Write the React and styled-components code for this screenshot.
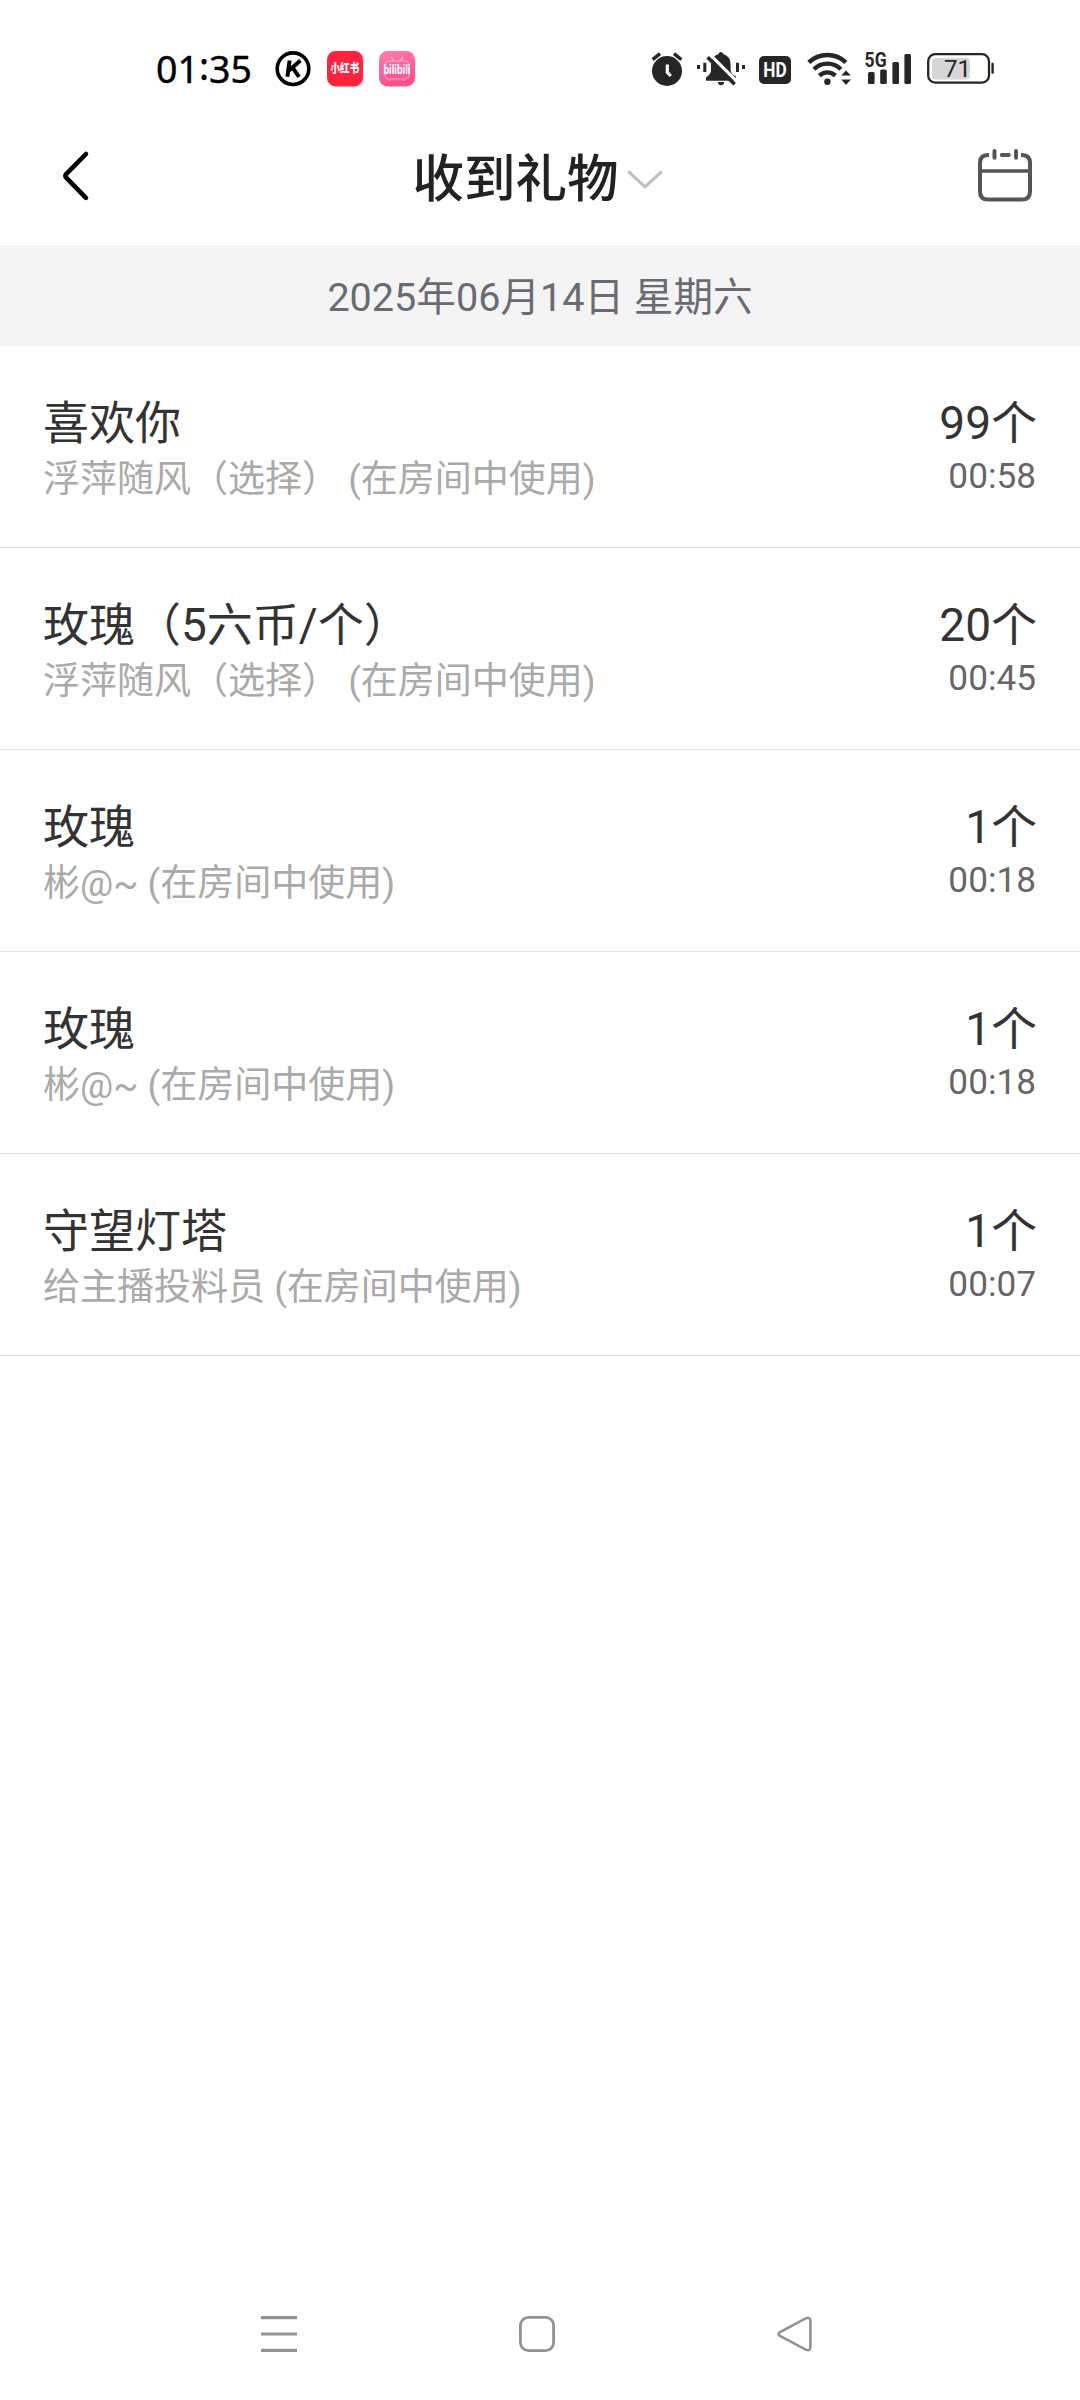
import React from "react";
import styled, { createGlobalStyle } from "styled-components";

const gifts = [
  { name: "喜欢你", from: "浮萍随风（选择） (在房间中使用)", count: "99个", time: "00:58" },
  { name: "玫瑰（5六币/个）", from: "浮萍随风（选择） (在房间中使用)", count: "20个", time: "00:45" },
  { name: "玫瑰", from: "彬@~ (在房间中使用)", count: "1个", time: "00:18" },
  { name: "玫瑰", from: "彬@~ (在房间中使用)", count: "1个", time: "00:18" },
  { name: "守望灯塔", from: "给主播投料员 (在房间中使用)", count: "1个", time: "00:07" },
];

const StatusLeft = () => {
  return (
    <StatusGroup $gap={16}>
      <Clock>01<Colon>:</Colon>35</Clock>
      <svg width="36" height="38" viewBox="0 0 36 38">
        <circle cx="18" cy="18.7" r="15.8" fill="none" stroke="#000" strokeWidth="3.6" />
        <path d="M14.6 10.4L12.4 26.8M25.4 10.4L14 20.4M17.6 17.6L24 26.8" fill="none" stroke="#000" strokeWidth="4" />
      </svg>
      <svg width="36" height="38" viewBox="0 0 36 38">
        <rect x="0" y="1" width="36" height="35.5" rx="8.5" fill="#ff2340" />
        <BadgeText x="3.6" y="23.2" fontSize="12" textLength="28.6" lengthAdjust="spacingAndGlyphs">小红书</BadgeText>
      </svg>
      <svg width="36" height="38" viewBox="0 0 36 38">
        <defs>
          <linearGradient id="pink" x1="0" y1="0" x2="0.3" y2="1">
            <stop offset="0" stopColor="#fd7fb2" />
            <stop offset="1" stopColor="#fb4f8c" />
          </linearGradient>
        </defs>
        <rect x="0" y="1" width="36" height="35.5" rx="8.5" fill="url(#pink)" />
        <rect x="6" y="11" width="24" height="18" rx="4" fill="none" stroke="#fda5c8" strokeWidth="1.2" />
        <path d="M12 7l3 4M24 7l-3 4M11 29v2M25 29v2" stroke="#fda5c8" strokeWidth="1.6" />
        <BadgeText x="4.5" y="24" fontSize="13" $weight={700} textLength="27" lengthAdjust="spacingAndGlyphs">bilibili</BadgeText>
      </svg>
    </StatusGroup>
  );
};

const StatusRight = () => {
  return (
    <StatusGroup $gap={14}>
      <svg width="32" height="38" viewBox="0 0 32 38">
        <circle cx="16" cy="21" r="15" fill="#262626" />
        <path d="M1.6 9.6L9 3.7M23 3.7L30.4 9.6" stroke="#262626" strokeWidth="3.4" />
        <path d="M16.3 14.5V22.4L19.8 26" fill="none" stroke="#fff" strokeWidth="3.2" />
      </svg>
      <svg width="48" height="38" viewBox="0 0 48 38">
        <path d="M0 15h3v4H0zM6.3 12.7h3V22h-3zM39 12.7h3V22h-3zM45 15h3v4h-3z" fill="#262626" />
        <path d="M9 30.7V27.5Q14 24 14 20V14Q14.5 6 21.5 4Q22 2 23.8 2T26.2 4Q33.2 6 33.6 14V20Q33.8 24.5 38.8 26.2V30.7Z" fill="#262626" />
        <path d="M20.8 32H27.2Q26.6 35.2 24 35.2T20.8 32Z" fill="#262626" />
        <path d="M13 4.6L41.5 33.1" stroke="#fff" strokeWidth="3.4" />
        <path d="M10.6 7.2L37.6 34.2" stroke="#262626" strokeWidth="3.6" />
      </svg>
      <svg width="32" height="38" viewBox="0 0 32 38">
        <rect x="0" y="6" width="32" height="28" rx="5" fill="#262626" />
        <BadgeText x="4.3" y="27.4" fontSize="20.5" $weight={700} textLength="23.4" lengthAdjust="spacingAndGlyphs">HD</BadgeText>
      </svg>
      <WifiIcon width="44" height="38" viewBox="0 0 44 38">
        <g fill="none" stroke="#262626" strokeWidth="4.4">
          <path d="M1.8 12.4A27 27 0 0 1 38.9 12.4" />
          <path d="M7 19.2A19 19 0 0 1 33.8 19.2" />
          <path d="M12.4 25.6A11.5 11.5 0 0 1 28.4 25.6" />
        </g>
        <circle cx="20.4" cy="31.8" r="3.2" fill="#262626" />
        <path d="M34.3 25.6L39 20.4L43.8 25.6ZM34.3 29.6L39 35L43.8 29.6Z" fill="#262626" />
      </WifiIcon>
      <svg width="48" height="38" viewBox="0 0 48 38">
        <g fill="#262626">
          <rect x="3" y="22" width="6.6" height="12" rx="1.5" />
          <rect x="15.2" y="19.4" width="6.6" height="14.6" rx="1.5" />
          <rect x="27.4" y="12" width="6.6" height="22" rx="1.5" />
          <rect x="39.4" y="4" width="6.6" height="30" rx="1.5" />
        </g>
        <DarkText x="-0.4" y="16.8" fontSize="20" fontWeight="700" textLength="22" lengthAdjust="spacingAndGlyphs">5G</DarkText>
      </svg>
      <svg width="68" height="38" viewBox="0 0 68 38">
        <rect x="5" y="8" width="38" height="21.4" rx="4" fill="#d6d6d6" />
        <rect x="1.2" y="4.2" width="60.8" height="28.4" rx="7" fill="none" stroke="#262626" strokeWidth="2.3" />
        <rect x="64.4" y="12.7" width="2.4" height="11" rx="1" fill="#262626" />
        <DarkText x="17" y="27.4" fontSize="24" textLength="27" lengthAdjust="spacingAndGlyphs">71</DarkText>
      </svg>
    </StatusGroup>
  );
};

const GiftRow = ({ gift }) => {
  return (
    <StyledRow>
      <RowSide>
        <GiftName>{gift.name}</GiftName>
        <GiftFrom>{gift.from}</GiftFrom>
      </RowSide>
      <RowSide $end>
        <GiftName>{gift.count}</GiftName>
        <GiftTime>{gift.time}</GiftTime>
      </RowSide>
    </StyledRow>
  );
};

const App = () => {
  return (
    <StyledPage>
      <GlobalStyle />
      <StatusBar>
        <StatusLeft />
        <StatusRight />
      </StatusBar>
      <TitleBar>
        <svg width="26" height="50" viewBox="0 0 26 50">
          <path d="M23 3L3.2 23.1Q1.6 24.9 3.2 26.7L23 46.9" fill="none" stroke="#000" strokeWidth="4.6" strokeLinecap="round" />
        </svg>
        <TitleGroup>
          <Title>收到礼物</Title>
          <svg width="36" height="20" viewBox="0 0 36 20">
            <path d="M1.2 1.3L18 16.9L34.8 1.3" fill="none" stroke="#c0c0c0" strokeWidth="3.2" />
          </svg>
        </TitleGroup>
        <svg width="54" height="54" viewBox="0 0 54 54">
          <g fill="none" stroke="#555" strokeWidth="4">
            <path d="M11 6H10Q2 6 2 14V42.5Q2 50.5 10 50.5H44Q52 50.5 52 42.5V14Q52 6 44 6H43" />
            <path d="M2 22H52" strokeWidth="3.6" />
            <path d="M16.5 2V8.8M38 2V8.8M23.8 6H30.8" strokeLinecap="round" />
          </g>
        </svg>
      </TitleBar>
      <DateBar>2025年06月14日 星期六</DateBar>
      <GiftList>
        {gifts.map((gift, i) => (
          <GiftRow key={i} gift={gift} />
        ))}
      </GiftList>
      <NavBar>
        <svg width="36" height="36" viewBox="0 0 36 36">
          <path d="M0 1.7H36M0 18H36M0 34.3H36" stroke="#929292" strokeWidth="3.2" />
        </svg>
        <svg width="36" height="36" viewBox="0 0 36 36">
          <rect x="1.4" y="1.4" width="33.2" height="33.2" rx="8" fill="none" stroke="#929292" strokeWidth="2.8" />
        </svg>
        <svg width="36" height="36" viewBox="0 0 36 36">
          <path d="M29.2 2.2L3 16Q0 18 3 20L29.2 33.8Q33.2 35.2 33.4 31.5V4.5Q33.2 .8 29.2 2.2Z" fill="none" stroke="#929292" strokeWidth="2.6" />
        </svg>
      </NavBar>
    </StyledPage>
  );
};

const GlobalStyle = createGlobalStyle`
  body {
    margin: 0;
    background-color: #fff;
  }
  svg {
    display: block;
    flex-shrink: 0;
    overflow: visible;
  }
`;

const StyledPage = styled.div`
  display: flex;
  flex-direction: column;
  width: 1080px;
  height: 2400px;
  background-color: #fff;
  font-family: Roboto, "Noto Sans CJK SC", sans-serif;
`;

const StatusBar = styled.div`
  display: flex;
  justify-content: space-between;
  align-items: center;
  box-sizing: border-box;
  height: 106px;
  padding: 32px 85px 0 156px;
`;

const StatusGroup = styled.div`
  display: flex;
  align-items: center;
  gap: ${(props) => props.$gap}px;
`;

const Clock = styled.span`
  width: 103px;
  font-family: "Noto Sans", sans-serif;
  font-size: 37.5px;
  font-weight: 400;
  line-height: 38px;
  color: #000;
  white-space: nowrap;
  -webkit-text-stroke: 0.4px #000;
`;

const Colon = styled.span`
  display: inline-block;
  transform: translateY(-3px);
`;

const WifiIcon = styled.svg`
  margin-left: 2px;
`;

const BadgeText = styled.text`
  fill: #fff;
  font-family: Roboto, "Noto Sans CJK SC", sans-serif;
  font-weight: ${(props) => props.$weight || 900};
`;

const DarkText = styled.text`
  fill: #262626;
  font-family: Roboto, sans-serif;
`;

const TitleBar = styled.div`
  display: flex;
  justify-content: space-between;
  align-items: center;
  box-sizing: border-box;
  height: 139px;
  padding: 0 48px 0 63px;
`;

const TitleGroup = styled.div`
  display: flex;
  align-items: center;
  gap: 8px;
  padding: 8px 0 0 8px;
`;

const Title = styled.div`
  font-size: 51.5px;
  font-weight: 500;
  line-height: 70px;
  color: #222;
`;

const DateBar = styled.div`
  box-sizing: border-box;
  height: 101px;
  padding-top: 2px;
  background-color: #f4f4f4;
  font-size: 39.6px;
  line-height: 101px;
  text-align: center;
  color: #686c72;
`;

const GiftList = styled.div`
  flex: 1;
`;

const StyledRow = styled.div`
  display: flex;
  justify-content: space-between;
  box-sizing: border-box;
  height: 202px;
  padding: 47px 43px 0;
  border-bottom: 1px solid #e2e2e2;
`;

const RowSide = styled.div`
  display: flex;
  flex-direction: column;
  align-items: ${(props) => (props.$end ? "flex-end" : "flex-start")};
`;

const GiftName = styled.div`
  font-size: 46px;
  line-height: 60px;
  color: #333;
`;

const GiftFrom = styled.div`
  font-size: 37px;
  line-height: 53px;
  color: #aaa;
  white-space: pre;
`;

const GiftTime = styled.div`
  padding-right: 1px;
  font-size: 35.2px;
  line-height: 47px;
  color: #666;
`;

const NavBar = styled.div`
  display: flex;
  align-items: center;
  gap: 222px;
  height: 132px;
  padding-left: 261px;
`;

export default App;
